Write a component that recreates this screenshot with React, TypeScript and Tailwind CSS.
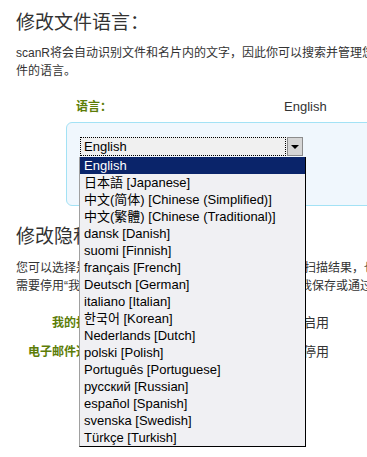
import React from 'react'

//language options shown in the open dropdown
const languages = [
    'English',
    '日本語 [Japanese]',
    '中文(简体) [Chinese (Simplified)]',
    '中文(繁體) [Chinese (Traditional)]',
    'dansk [Danish]',
    'suomi [Finnish]',
    'français [French]',
    'Deutsch [German]',
    'italiano [Italian]',
    '한국어 [Korean]',
    'Nederlands [Dutch]',
    'polski [Polish]',
    'Português [Portuguese]',
    'русский [Russian]',
    'español [Spanish]',
    'svenska [Swedish]',
    'Türkçe [Turkish]',
]

const font = "font-['Liberation_Sans','Noto_Sans_CJK_SC',sans-serif]"

function Row({ label, value, gap }: { label: string; value: string; gap: string }) {
    return (
        <div className="flex items-center h-5">
            <div className="w-[156px] shrink-0 text-center text-[12px] font-bold text-[#5c7d08] whitespace-nowrap">
                {label}
            </div>
            <div className={`${gap} text-[13px] text-[#333] whitespace-nowrap`}>{value}</div>
        </div>
    )
}

export default function App() {
    return (
        <div className={`w-[367px] h-[457px] overflow-hidden bg-white ${font}`}>
            <div className="w-[560px] pl-4">
                <h1 className="mt-[9px] text-[19px] leading-[28px] text-[#333] font-normal">
                    修改文件语言：
                </h1>
                <p className="mt-[7px] text-[12px] leading-[18px] text-[#333] whitespace-nowrap">
                    scanR将会自动识别文件和名片内的文字，因此你可以搜索并管理您的文件。请选择文
                    <br />
                    件的语言。
                </p>

                <div className="mt-[17px]">
                    <Row label="语言：" value="English" gap="ml-[112px]" />
                </div>

                <div className="mt-[5px] ml-[50px] h-[84px] rounded-md border border-[#a3e2f5] bg-[#f0f7fd] pt-[14px] pl-[13px]">
                    <div className="relative flex w-[223px] h-[19px] bg-[#f0f0f0]">
                        <div className="flex-1 border border-dotted border-black pl-[3px] text-[13px] leading-[17px] text-black">
                            English
                        </div>
                        <div className="ml-px w-4 flex items-center justify-center border border-[#8c8c8c] bg-[#d6d6d6]">
                            <div className="w-0 h-0 border-l-[4px] border-r-[4px] border-t-[4px] border-l-transparent border-r-transparent border-t-black"></div>
                        </div>

                        {/* open list */}
                        <div className="absolute left-[-1px] top-[20px] z-10 w-[227px] border-l border-l-[#a0a0a0] border-r border-b border-r-black border-b-black bg-[#f0f0f3]">
                            {languages.map((lang, i) => (
                                <div
                                    key={lang}
                                    className={
                                        i === 0
                                            ? 'h-[17px] pl-1 text-[13px] leading-[17px] whitespace-nowrap bg-[#0a246a] text-white'
                                            : 'h-[17px] pl-1 text-[13px] leading-[17px] whitespace-nowrap text-black'
                                    }
                                >
                                    {lang}
                                </div>
                            ))}
                        </div>
                    </div>
                </div>

                <h1 className="mt-[17px] text-[19px] leading-[28px] text-[#333] font-normal">
                    修改隐私设置：
                </h1>
                <p className="mt-[8px] text-[12px] leading-[18px] text-[#333] whitespace-nowrap">
                    您可以选择是否在服务器上保存您的所有文件和名片的扫描结果，也可以随时删除。
                    <br />
                    需要停用“我的扫描历史”功能，您的扫描结果将不会由我保存或通过电子邮件发送。
                </p>

                <div className="mt-[18px]">
                    <Row label="我的扫描历史：" value="启用" gap="ml-[131px]" />
                </div>
                <div className="mt-[9px]">
                    <Row label="电子邮件通知扫描结果：" value="停用" gap="ml-[131px]" />
                </div>
            </div>
        </div>
    )
}
